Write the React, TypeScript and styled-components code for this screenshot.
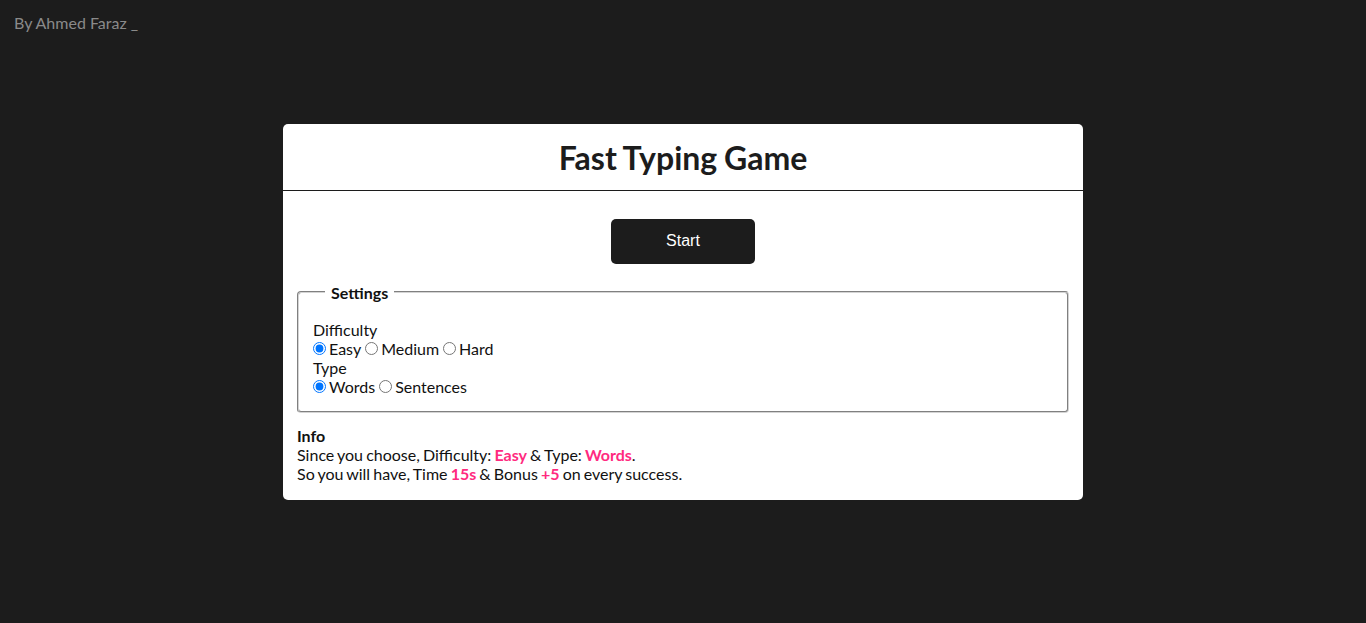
import React, { useState } from "react";
import styled, { createGlobalStyle } from "styled-components";

const GlobalStyle = createGlobalStyle`
  html, body { margin: 0; padding: 0; }
  body {
    background: #1c1c1c;
    font-family: Lato, "Liberation Sans", sans-serif;
    font-size: 16px;
  }
`;

const Page = styled.div`
  display: grid;
  height: 100vh;
  grid-template: 1fr / 1fr;
`;

const Byline = styled.div`
  grid-area: 1 / 1;
  align-self: start;
  justify-self: start;
  padding: 13px 0 0 14px;
  color: #8a8a8a;
  line-height: 19px;
`;

const Card = styled.main`
  grid-area: 1 / 1;
  align-self: center;
  justify-self: center;
  width: 800px;
  background: #fff;
  border-radius: 5px;
  color: #111;
  word-spacing: -0.0625em;
`;

const Header = styled.header`
  border-bottom: 1px solid #1c1c1c;
  padding: 15px 0 13px;
  text-align: center;
`;

const Title = styled.h1`
  margin: 0;
  font-size: 32px;
  font-weight: 700;
  line-height: 38px;
  color: #1c1c1c;
`;

const Body = styled.section`
  padding: 28px 14px 17px;
  display: flex;
  flex-direction: column;
`;

const StartButton = styled.button`
  align-self: center;
  width: 144px;
  height: 45px;
  border: none;
  border-radius: 5px;
  background: #1c1c1c;
  color: #fff;
  font-family: "Liberation Sans", Arial, sans-serif;
  font-size: 16px;
  word-spacing: normal;
  cursor: pointer;
`;

const Fieldset = styled.fieldset`
  margin: 19px 0 0;
  padding: 18px 14px 15px;
  border: 2px groove #d4d4d4;
  border-radius: 4px;
  line-height: 19px;
`;

const Legend = styled.legend`
  font-weight: 700;
  padding: 0 6px;
  margin-left: 12px;
`;

const Label = styled.div``;

const Options = styled.div`
  display: flex;
  align-items: center;
`;

const Option = styled.label`
  display: inline-flex;
  align-items: center;
  gap: 3px;
  margin-right: 4px;
  input {
    margin: 0;
    width: 13px;
    height: 13px;
  }
`;

const Info = styled.div`
  margin-top: 13px;
  line-height: 19px;
`;

const InfoTitle = styled.div`
  font-weight: 700;
`;

const Hl = styled.span`
  color: #ff2a7f;
  font-weight: 700;
`;

export default function App() {
  const [difficulty, setDifficulty] = useState("Easy");
  const [type, setType] = useState("Words");
  const time = difficulty === "Easy" ? "15s" : difficulty === "Medium" ? "10s" : "5s";
  const bonus = difficulty === "Easy" ? "+5" : difficulty === "Medium" ? "+3" : "+2";
  return (
    <Page>
      <GlobalStyle />
      <Byline>By Ahmed Faraz _</Byline>
      <Card>
        <Header>
          <Title>Fast Typing Game</Title>
        </Header>
        <Body>
          <StartButton>Start</StartButton>
          <Fieldset>
            <Legend>Settings</Legend>
            <Label>Difficulty</Label>
            <Options>
              {["Easy", "Medium", "Hard"].map((d) => (
                <Option key={d}>
                  <input
                    type="radio"
                    name="difficulty"
                    checked={difficulty === d}
                    onChange={() => setDifficulty(d)}
                  />
                  {d}
                </Option>
              ))}
            </Options>
            <Label>Type</Label>
            <Options>
              {["Words", "Sentences"].map((t) => (
                <Option key={t}>
                  <input
                    type="radio"
                    name="type"
                    checked={type === t}
                    onChange={() => setType(t)}
                  />
                  {t}
                </Option>
              ))}
            </Options>
          </Fieldset>
          <Info>
            <InfoTitle>Info</InfoTitle>
            <div>
              Since you choose, Difficulty: <Hl>{difficulty}</Hl> &amp; Type: <Hl>{type}</Hl>.
            </div>
            <div>
              So you will have, Time <Hl>{time}</Hl> &amp; Bonus <Hl>{bonus}</Hl> on every success.
            </div>
          </Info>
        </Body>
      </Card>
    </Page>
  );
}
